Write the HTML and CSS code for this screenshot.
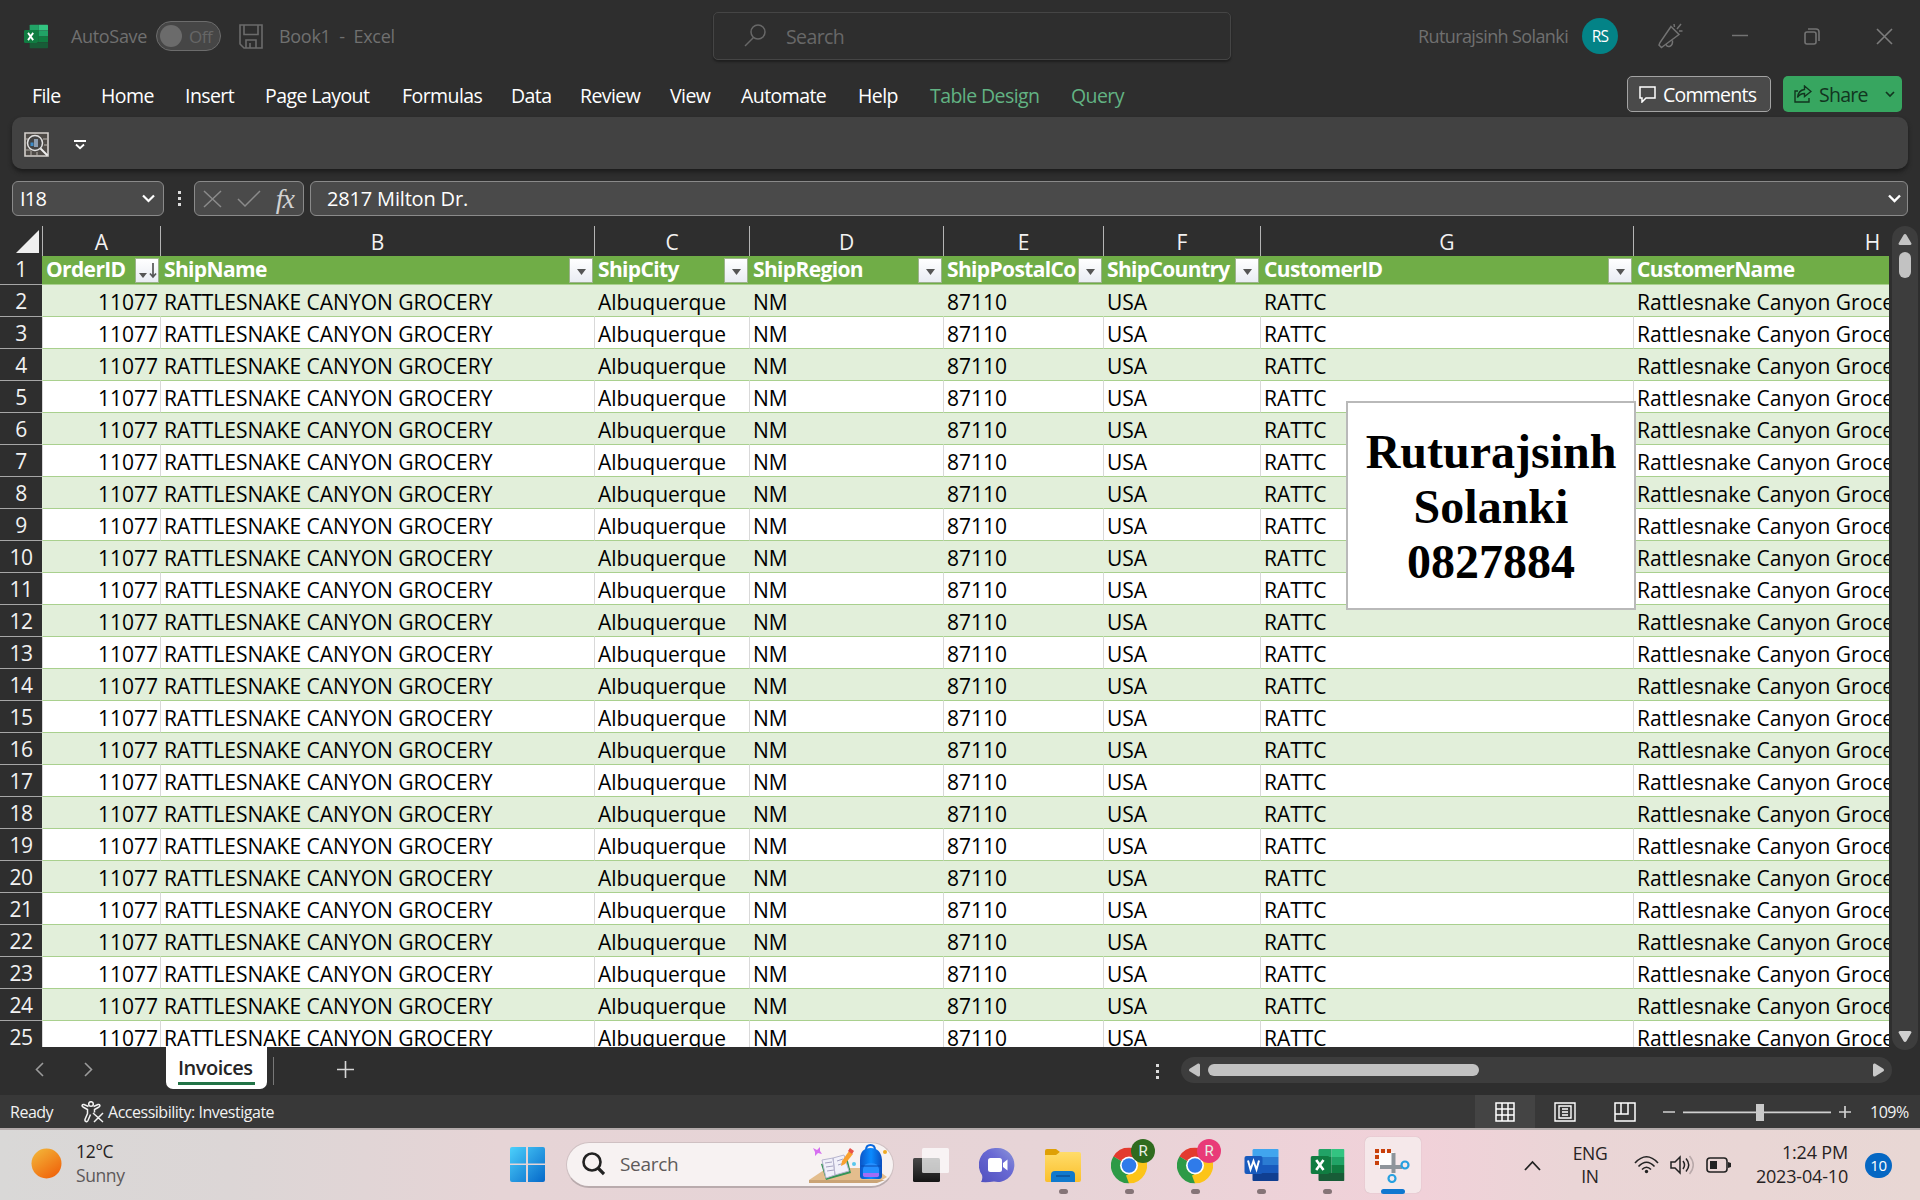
FILE: index.html
```html
<!DOCTYPE html>
<html lang="en">
<head>
<meta charset="utf-8">
<title>Book1 - Excel</title>
<link rel="stylesheet" href="styles.css">
</head>
<body>
<svg width="0" height="0" class="defs">
  <defs>
    <linearGradient id="sun" x1="0" y1="0" x2=".7" y2="1"><stop offset="0" stop-color="#f3bb3c"/><stop offset="1" stop-color="#f0650c"/></linearGradient>
    <linearGradient id="win" x1="0" y1="0" x2="1" y2="1"><stop offset="0" stop-color="#4cd0fb"/><stop offset="1" stop-color="#0568c9"/></linearGradient>
    <linearGradient id="chat" x1="0" y1="1" x2="1" y2="0"><stop offset="0" stop-color="#5050be"/><stop offset=".6" stop-color="#6a6ad4"/><stop offset="1" stop-color="#8d97d8"/></linearGradient>
    <linearGradient id="folder" x1="0" y1="0" x2="0" y2="1"><stop offset="0" stop-color="#ffdc6a"/><stop offset="1" stop-color="#fbc02c"/></linearGradient>
    <linearGradient id="dark" x1="0" y1="0" x2="0" y2="1"><stop offset="0" stop-color="#484848"/><stop offset="1" stop-color="#151515"/></linearGradient>
    <linearGradient id="bag" x1="0" y1="0" x2="1" y2="0"><stop offset="0" stop-color="#0a55c8"/><stop offset=".5" stop-color="#0b8bff"/><stop offset="1" stop-color="#0a4fc0"/></linearGradient>
    <symbol id="excel" viewBox="0 0 34 34">
      <path fill="#21a366" d="M9 1h12v8H8V2z"/><path fill="#33c481" d="M21 1h12a1 1 0 0 1 1 1v7H21z"/>
      <path fill="#107c41" d="M8 9h13v16H8z"/><path fill="#21a366" d="M21 9h13v8H21z"/><path fill="#107c41" d="M21 17h13v8H21z"/>
      <path fill="#185c37" d="M8 25h26v7a1 1 0 0 1-1 1H9a1 1 0 0 1-1-1z"/>
      <rect y="8" width="19" height="18" rx="2" fill="#107c41"/>
      <path d="M5.700 12l7.300 10M13 12L5.700 22" stroke="#fff" stroke-width="2.600" fill="none"/>
    </symbol>
    <symbol id="chrome" viewBox="0 0 36 36">
      <path fill="#e33b2e" d="M18 18L2.400 9A18 18 0 0 1 33.600 9z"/>
      <path fill="#fcc419" d="M18 18l15.600-9A18 18 0 0 1 18 36z"/>
      <path fill="#2d9a46" d="M18 18v18A18 18 0 0 1 2.400 9z"/>
      <path fill="#e33b2e" d="M18 9h15.600L29 14z"/><path fill="#2d9a46" d="M2.400 9l7.800 13.500L14 18z"/><path fill="#fcc419" d="M25.800 22.500L18 36l-3-8z"/>
      <circle cx="18" cy="18" r="9" fill="#fff"/><circle cx="18" cy="18" r="7.300" fill="#2f7bea"/>
    </symbol>
  </defs>
</svg>

<header class="title-bar">
  <div class="title-left">
    <svg class="app-icon" width="24" height="25" preserveAspectRatio="none" viewBox="0 0 34 34"><use href="#excel"/></svg>
    <span class="autosave">AutoSave</span>
    <span class="toggle"><i></i>Off</span>
    <svg class="save" width="24" height="25" viewBox="0 0 24 25" fill="none" stroke="#6b6b6b" stroke-width="1.600"><path d="M1 1h22v23H5l-4-4zM5 1v9.500h14V1M7 24v-8h10v8M11 19v5"/></svg>
    <span class="book">Book1 &nbsp;- &nbsp;Excel</span>
  </div>
  <div class="search-box">
    <svg width="22" height="24" viewBox="0 0 22 24" fill="none" stroke="#686868" stroke-width="1.500"><circle cx="14" cy="8" r="7"/><path d="M9.500 13.500L1 22"/></svg>
    <span>Search</span>
  </div>
  <div class="title-right">
    <span class="user">Ruturajsinh Solanki</span>
    <span class="avatar">RS</span>
    <svg class="mega" width="25" height="26" viewBox="0 0 25 26" fill="none" stroke="#737373" stroke-width="1.500"><path d="M13 3.500l8 8L5.500 23l-2 1.500L1 22l1-2.500zM8 21.500c1.500 3.500 7 2.500 6.500-4M16 1l.5 3M23 1l-4 5M21 8h3.500"/></svg>
    <svg class="win-min" width="16" height="16" stroke="#737373" stroke-width="1.500"><path d="M0 7.500h16"/></svg>
    <svg class="win-max" width="17" height="17" viewBox="0 0 17 17" fill="none" stroke="#737373" stroke-width="1.600"><rect x="1" y="4" width="11" height="12" rx="2"/><path d="M4 1h8q3 0 3 3v9"/></svg>
    <svg width="17" height="17" viewBox="0 0 17 17" stroke="#7c7c7c" stroke-width="1.600"><path d="M1 1l15 15M16 1L1 16"/></svg>
  </div>
</header>

<nav class="menu">
  <div class="tabs">
    <span>File</span><span>Home</span><span>Insert</span><span>Page Layout</span><span>Formulas</span><span>Data</span><span>Review</span><span>View</span><span>Automate</span><span>Help</span><span class="context">Table Design</span><span class="context">Query</span>
  </div>
  <button class="comments"><svg width="17" height="17" viewBox="0 0 17 17" fill="none" stroke="#fff" stroke-width="1.500"><path d="M1 1h15v11H7l-4 4v-4H1z"/></svg><span>Comments</span></button>
  <button class="share"><svg width="18" height="18" viewBox="0 0 18 18" fill="none" stroke="#12351f" stroke-width="1.400"><path d="M4 6H1v11h14v-4M10.500 1L17 6.500l-6.500 5V8.500C7 8.500 5 10 3.500 12.500 4 8 6.500 5 10.500 4.500z"/></svg><span>Share</span><svg width="10" height="8" viewBox="0 0 10 8" fill="none" stroke="#12351f" stroke-width="1.700"><path d="M1 2l4 4 4-4"/></svg></button>
</nav>

<section class="ribbon">
  <svg width="25" height="25" viewBox="0 0 25 25" fill="none"><path d="M1 1h23v23H1z" fill="#4f4b47" stroke="#d4d0cc" stroke-width="1.600"/><path d="M1 7h5M1 18h6M7 24v-5M13 24v-4M19 7h5M20 13h4" stroke="#b9b4ae"/><circle cx="11" cy="11" r="7.500" fill="#444" stroke="#e2e2e2" stroke-width="1.500"/><path d="M6.500 10.500h3V14h-3z" fill="#3d8bc9"/><path d="M10 7h4v8h-4z" fill="#8d9db0"/><path d="M16.500 16.500l7 7" stroke="#eee" stroke-width="2"/></svg>
  <svg width="12" height="10" viewBox="0 0 12 10" fill="none" stroke="#fff" stroke-width="1.800"><path d="M0 1h12M2 4.500l4 3.700 4-3.700"/></svg>
</section>

<section class="formula-bar">
  <div class="name-box"><span>I18</span><svg width="13" height="9" viewBox="0 0 13 9" fill="none" stroke="#fff" stroke-width="2.200"><path d="M1 1.500l5.500 5.500L12 1.500"/></svg></div>
  <div class="dots"><i></i><i></i><i></i></div>
  <div class="fx-box">
    <svg width="19" height="18" viewBox="0 0 19 18" stroke="#8b8b8b" stroke-width="1.500"><path d="M1 1l17 16M18 1L1 17"/></svg>
    <svg width="24" height="18" viewBox="0 0 24 18" fill="none" stroke="#8b8b8b" stroke-width="1.500"><path d="M1 9l7 7L23 1"/></svg>
    <em>fx</em>
  </div>
  <div class="formula"><span>2817 Milton Dr.</span><svg width="13" height="9" viewBox="0 0 13 9" fill="none" stroke="#fff" stroke-width="2.400"><path d="M1 1.500l5.500 5.500L12 1.500"/></svg></div>
</section>

<main class="workbook">
  <div class="sheet">
    <div class="row letters"><span class="corner"><svg width="23" height="23"><path d="M23 0v23H0z" fill="#efefef"/></svg></span><span>A</span><span>B</span><span>C</span><span>D</span><span>E</span><span>F</span><span>G</span><span class="col-h">H</span></div>
    <div class="row heads" id="heads"><b>1</b></div>
    <div id="rows"></div>
    <div class="note">Ruturajsinh<br>Solanki<br>0827884</div>
  </div>
  <div class="v-scroll">
    <svg width="14" height="11"><path d="M7 0q1 0 1.500 1l5 8.500q0 1.500-1.500 1.500h-10Q.500 11 .500 9.500l5-8.500Q6 0 7 0z" fill="#c3c3c3"/></svg>
    <i></i>
    <svg class="down" width="14" height="11"><path d="M7 11q-1 0-1.500-1l-5-8.500Q.500 0 2 0h10q1.500 0 1.500 1.500l-5 8.500Q8 11 7 11z" fill="#d0d0d0"/></svg>
  </div>
</main>

<section class="sheet-tabs">
  <svg class="prev" width="9" height="15" fill="none" stroke="#9b9b9b" stroke-width="1.600"><path d="M8 1L1.500 7.500 8 14"/></svg>
  <svg class="next" width="9" height="15" fill="none" stroke="#9b9b9b" stroke-width="1.600"><path d="M1 1l6.500 6.500L1 14"/></svg>
  <div class="sheet-tab"><span>Invoices</span></div>
  <i class="divider"></i>
  <svg class="add" width="17" height="17" stroke="#d6d6d6" stroke-width="1.600"><path d="M8.500 0v17M0 8.500h17"/></svg>
  <div class="dots tab-dots"><i></i><i></i><i></i></div>
  <div class="h-scroll">
    <svg width="11" height="14"><path d="M0 7q0-1 1-1.500L9 .500Q11 0 11 2v10q0 2-2 1.500L1 8.500Q0 8 0 7z" fill="#c3c3c3"/></svg>
    <i></i>
    <svg class="right" width="11" height="14"><path d="M11 7q0-1-1-1.500L2 .500Q0 0 0 2v10q0 2 2 1.500l8-5Q11 8 11 7z" fill="#c9c9c9"/></svg>
  </div>
</section>

<section class="status">
  <span class="ready">Ready</span>
  <svg class="access" width="23" height="22" viewBox="0 0 23 22" fill="none" stroke="#f2f2f2" stroke-width="1.500"><circle cx="10" cy="3" r="2.300"/><path d="M7.500 5.500L3 3.500C1 3 .500 5 2 6l4.500 2.500v4L4 18.500c-.5 2 2 3 3 1l2.500-6M12.500 5.500L17 3.500c2-.5 2.500 1.500 1 2.500l-4.500 2.500v3M12 12l10 9M22 12l-9 9"/></svg>
  <span class="check">Accessibility: Investigate</span>
  <div class="view active"><svg width="20" height="20" fill="none" stroke="#fff" stroke-width="1.500"><path d="M1 1h18v18H1zM1 7h18M1 13h18M7 1v18M13 1v18"/></svg></div>
  <div class="view"><svg width="22" height="20" fill="none" stroke="#fff" stroke-width="1.400"><path d="M1 1h20v18H1zM5 4h12v12H5zM8 7h6M8 10h6M8 13h6"/></svg></div>
  <div class="view"><svg width="22" height="20" fill="none" stroke="#fff" stroke-width="1.500"><path d="M1 1h20v18H1zM1 12h13V1M7 1v11"/></svg></div>
  <svg class="zoom" width="190" height="20" stroke="#d0d0d0" stroke-width="1.700"><path d="M0 10h12M20 10.300h148M176 10h12M182 4v12"/><rect x="93" y="2" width="8" height="17" fill="#c9c9c9" stroke="none"/></svg>
  <span class="percent">109%</span>
</section>

<footer class="taskbar">
  <div class="weather">
    <svg width="31" height="31"><circle cx="15.500" cy="15.500" r="15" fill="url(#sun)"/></svg>
    <div>12°C<small>Sunny</small></div>
  </div>
  <svg class="start" width="35" height="35"><path d="M2 0h14v16.500H0V2q0-2 2-2zM18 0h15q2 0 2 2v14.500H18zM0 18h16v17H2q-2 0-2-2zM18 18h17v15q0 2-2 2H18z" fill="url(#win)"/></svg>
  <div class="task-search">
    <svg width="23" height="24" fill="none" stroke="#222" stroke-width="2.600"><circle cx="10" cy="10" r="8.500"/><path d="M16 16l6 6" stroke-width="3.200"/></svg>
    <span>Search</span>
    <svg class="doodle" width="81" height="40" viewBox="0 0 81 40">
      <path d="M0 36l18-12h48l12 9-5 3z" fill="#e3bd8d"/><path d="M0 36h76l-8 3H0z" fill="#caa476"/>
      <path d="M12 20l26-7 4 16-25 7z" fill="#359556"/><path d="M13 16l11-2 2 17-9 3zM24 14l11-3 5 16-14 4z" fill="#f1f0fa" stroke="#b7b5cf"/><path d="M16 19l7-1M17 23l7-1M18 27l7-1M28 17l6-2M29 21l6-2" stroke="#a5a3c2"/>
      <path d="M32 22l1-5L40 7l4 3-8 10z" fill="#f9a12f"/><path d="M39 7l2-3 4 3-2 3z" fill="#e8524a"/>
      <path d="M57 6q0-5 4.500-5T66 6" fill="none" stroke="#0b68dd" stroke-width="2"/><path d="M51 16q0-12 10.500-12T73 16v16q0 3-3 3H54q-3 0-3-3z" fill="url(#bag)"/><path d="M54 25q1-6 8-6t8 6v6q0 2-3 2H57q-3 0-3-2z" fill="#258fff"/><path d="M54 29h16v2q0 2-3 2H57q-3 0-3-2z" fill="#a36cf5"/><path d="M52 22h20" stroke="#084bb1"/>
      <path d="M4 4l4 2 3-3 0 4 2 3-4-1-3 3 0-4z" fill="#d66ff0"/><circle cx="45" cy="20" r="2" fill="#59c7ec"/><circle cx="76" cy="8" r="2" fill="#efaa23"/>
    </svg>
  </div>
  <div class="apps">
    <div class="app"><svg width="36" height="36"><rect x="0" y="11" width="27" height="24" rx="1.500" fill="url(#dark)"/><rect x="9" y="1" width="27" height="25" rx="1.500" fill="#fff" opacity=".72"/></svg></div>
    <div class="app"><svg width="36" height="36"><path d="M18 1a16.500 17 0 1 1-3 33.500Q9 35.500 2 35q2-3 1-7A16.500 17 0 0 1 18 1z" fill="url(#chat)"/><rect x="9" y="11" width="14" height="14" rx="2.500" fill="#fff"/><path d="M24 16l4.500-3.500v11L24 20z" fill="#fff"/></svg></div>
    <div class="app run"><svg width="36" height="36"><path d="M0 9V4q0-2 2-2h9l4 3-3 4z" fill="#dfa005"/><path d="M0 8h11l4-3h19q2 0 2 2v26q0 2-2 2H2q-2 0-2-2z" fill="url(#folder)"/><path d="M6 35v-7q0-4 4-4h16q4 0 4 4v7z" fill="#1079cd"/><path d="M11 29h14" stroke="#0b5196" stroke-width="1.500"/></svg></div>
    <div class="app run"><svg width="36" height="37" viewBox="0 0 36 36"><use href="#chrome"/></svg><span class="profile">R</span></div>
    <div class="app run"><svg width="36" height="37" viewBox="0 0 36 36"><use href="#chrome"/></svg><span class="profile pink">R</span></div>
    <div class="app run"><svg width="35" height="34" viewBox="0 0 34 34"><path fill="#41a5ee" d="M9 1h24q1 0 1 1v7H8V2z"/><path fill="#2b7cd3" d="M8 9h26v8H8z"/><path fill="#185abd" d="M8 17h26v8H8z"/><path fill="#103f91" d="M8 25h26v7q0 1-1 1H9q-1 0-1-1z"/><rect y="8" width="18" height="18" rx="2" fill="#185abd"/><path d="M3.500 12.500l2.500 9 3-8.500 3 8.500 2.500-9" fill="none" stroke="#fff" stroke-width="2"/></svg></div>
    <div class="app run"><svg width="35" height="34" viewBox="0 0 34 34"><use href="#excel"/></svg></div>
    <div class="app current"><svg width="36" height="36"><rect x="4" y="5" width="15" height="16" fill="#fdfdfd"/><path d="M2 18V4h16" fill="none" stroke="#c8410c" stroke-width="4" stroke-dasharray="4 2"/><path d="M18.500 6v20M5 20h22" stroke="#8e959b" stroke-width="4"/><g fill="none" stroke="#27a0e0" stroke-width="2.200"><circle cx="30" cy="18" r="3.500"/><circle cx="17" cy="31.500" r="3.500"/></g></svg></div>
  </div>
  <div class="tray">
    <svg class="chev" width="17" height="11" fill="none" stroke="#222" stroke-width="1.800"><path d="M1 10l7.500-8L16 10"/></svg>
    <div class="lang">ENG<br>IN</div>
    <svg class="wifi" width="25" height="20" viewBox="0 0 25 20" fill="none" stroke="#222" stroke-width="1.600"><path d="M1 8Q12.500-4.500 24 8M4.500 11.500q8-8.500 16 0M8 14.500q4.500-4.500 9 0"/><circle cx="12.500" cy="16.500" r="1.700" fill="#222" stroke="none"/></svg>
    <svg class="vol" width="25" height="20" viewBox="0 0 25 20" fill="none" stroke="#222" stroke-width="1.500"><path d="M1 7h4l5-5v16l-5-5H1zM13 6q3 4 0 8M16 3.500q5.500 6.500 0 13"/><path d="M19.500 1q7.500 9 0 18" stroke="#b9a9aa"/></svg>
    <svg class="batt" width="25" height="16" viewBox="0 0 25 16"><rect x="1" y="1" width="20" height="14" rx="3" fill="none" stroke="#222" stroke-width="1.600"/><rect x="4" y="4" width="7" height="8" fill="#222"/><path d="M22 5l3 1v4l-3 1z" fill="#222"/></svg>
    <div class="clock">1:24 PM<br>2023-04-10</div>
    <span class="badge">10</span>
  </div>
</footer>
<script src="script.js"></script>
</body>
</html>
```
FILE: styles.css
```css
* { box-sizing: border-box; }
body {
  margin: 0; width: 1920px; height: 1200px; overflow: hidden;
  display: flex; flex-direction: column;
  background: #2e2e2e; color: #fff;
  font-family: "Open Sans", "Noto Sans", sans-serif; font-size: 20px;
}
svg { display: block; flex: none; }
.defs { position: absolute; }
span, b { white-space: nowrap; }

/* title bar */
.title-bar { height: 72px; flex: none; display: grid; grid-template-columns: 713px 518px 1fr; align-items: start; color: #707070; font-size: 18px; }
.title-left, .title-right { display: flex; align-items: center; height: 72px; }
.title-left { padding-left: 24px; }
.autosave { width: 85px; margin-left: 23px; letter-spacing: -.33px; }
.toggle { width: 65px; height: 30px; border: 1px solid #6c6c6c; border-radius: 15px; background: #464646; display: flex; align-items: center; gap: 7px; padding-left: 3px; font-size: 17px; letter-spacing: -.5px; color: #666; }
.toggle i { width: 22px; height: 22px; border-radius: 50%; background: #6b6b6b; }
.save { margin-left: 18px; }
.book { margin-left: 16px; letter-spacing: -.3px; }
.search-box { height: 48px; margin-top: 12px; border: 1px solid #454545; border-radius: 5px; box-shadow: 0 2px 2px #1f1f1f; display: flex; align-items: center; gap: 20px; padding-left: 30px; font-size: 19.500px; letter-spacing: -.6px; color: #686868; }
.title-right { padding-left: 187px; }
.user { width: 151px; letter-spacing: -.61px; }
.avatar { width: 36px; height: 36px; margin-left: 13px; border-radius: 50%; background: #038387; color: #fff; font-size: 15.500px; display: grid; place-items: center; letter-spacing: -.7px; }
.mega { margin-left: 40px; }
.win-min { margin-left: 49px; }
.win-max { margin-left: 56px; margin-right: 55px; }

/* menu tabs */
.menu { height: 45px; flex: none; display: flex; align-items: flex-start; padding-top: 4px; }
.tabs { width: 1627px; padding: 6px 0 0 32px; display: grid; grid-template-columns: 69px 84px 80px 137px 109px 69px 90px 71px 117px 72px 141px 80px; font-size: 19.500px; line-height: 28px; letter-spacing: -.57px; }
.context { color: #62b383; }
button { font: 19.500px/1 "Open Sans", sans-serif; letter-spacing: -.75px; height: 36px; border-radius: 5px; display: flex; align-items: center; padding: 0; }
button span { padding-top: 2px; }
.comments { width: 144px; padding-left: 11px; gap: 7px; background: #4a4a4a; border: 1px solid #a3a3a3; color: #fff; }
.share { width: 119px; margin-left: 12px; padding-left: 11px; background: #37a660; border: 0; color: #12351f; }
.share span { width: 66px; margin-left: 7px; text-align: left; }

.ribbon { height: 52px; flex: none; margin: 0 12px; padding: 3px 0 0 12px; border-radius: 10px; background: #424242; box-shadow: 0 3px 4px #1c1c1c; display: flex; align-items: center; gap: 25px; }

/* formula bar */
.formula-bar { height: 35px; flex: none; margin: 12px 12px 0; display: flex; line-height: 33px; }
.name-box, .fx-box, .formula { border: 1px solid #8a8a8a; border-radius: 6px; background: #4a4a4a; display: flex; align-items: center; justify-content: space-between; }
.name-box { width: 152px; padding: 0 8px 0 7px; letter-spacing: -.8px; }
.dots { display: flex; flex-direction: column; gap: 3px; }
.dots i { width: 3px; height: 3px; background: #dcdcdc; }
.formula-bar .dots { margin: 10px 13px 0 14px; }
.fx-box { width: 110px; padding: 0 9px 0 8px; }
.fx-box em { font: italic 28px/30px "Liberation Serif", serif; color: #d2d2d2; letter-spacing: -1px; }
.formula { flex: 1; margin-left: 6px; padding: 0 6px 0 16px; letter-spacing: -.17px; }

/* grid */
.workbook { height: 831px; flex: none; display: flex; padding-top: 10px; }
.sheet { width: 1889px; height: 821px; overflow: hidden; position: relative; font-size: 21px; }
.row { display: grid; grid-template-columns: 42px 118px 434px 155px 194px 160px 157px 373px 480px; width: 2113px; height: 32px; line-height: 32px; }
.letters { height: 30px; line-height: 33px; text-align: center; color: #f2f2f2; }
.letters span + span { border-left: 1px solid #b4b4b4; }
.letters .col-h { padding-right: 2px; }
.corner { display: flex; justify-content: flex-end; padding: 4px 3px 0 0; }
.row b { background: #2e2e2e; color: #f2f2f2; font-weight: 400; text-align: center; border-bottom: 1px solid #a6a6a6; letter-spacing: -.4px; height: 32px; }
.cell { color: #000; background: #fff; padding: 1px 0 0 3px; height: 32px; border-bottom: 1px solid #a9d08e; border-left: 1px solid #d9d9d9; overflow: hidden; }
.cell:nth-child(2) { text-align: right; padding-right: 2px; }
.band .cell { background: #e2efda; border-left-color: #e2efda; }
.heads { height: 29px; line-height: 27px; }
.row.heads b { height: 29px; }
.head { background: #70ad47; border-bottom: 1px solid #a9d08e; font-weight: 700; letter-spacing: -.64px; padding-left: 4px; display: flex; justify-content: space-between; overflow: hidden; }
.filter { flex: none; width: 24px; height: 25px; margin: 2px 1px 0 0; background: linear-gradient(#fff, #e9ecf3); border: 1px solid #9db28d; }

.note { position: absolute; left: 1346px; top: 175px; width: 290px; height: 209px; padding-top: 21px; background: #fff; border: 2px solid #b9b9b9; color: #000; text-align: center; font: bold 48px/55px "Liberation Serif", serif; }

.v-scroll { width: 26px; height: 824px; margin-left: 3px; flex: none; border-radius: 13px; background: #3d3d3d; display: flex; flex-direction: column; align-items: center; padding: 8px 0; }
.v-scroll i { width: 12px; height: 26px; margin-top: 7px; border-radius: 6px; background: #c2c2c2; }
.down { margin-top: auto; }

/* sheet tabs */
.sheet-tabs { height: 48px; flex: none; display: flex; align-items: flex-start; }
.prev { margin: 15px 0 0 35px; }
.next { margin: 15px 0 0 40px; }
.sheet-tab { width: 101px; height: 42px; margin-left: 73px; padding: 6px 12px 0; background: #fff; border-radius: 0 0 7px 7px; color: #252525; font-size: 20px; font-weight: 600; letter-spacing: -.5px; }
.sheet-tab span { display: block; height: 32px; line-height: 30px; border-bottom: 3px solid #217346; }
.divider { width: 1px; height: 28px; margin: 10px 0 0 6px; background: #777; }
.add { margin: 14px 0 0 63px; }
.tab-dots { margin: 17px 0 0 802px; }
.h-scroll { width: 711px; height: 26px; margin: 10px 0 0 22px; border-radius: 13px; background: #3d3d3d; display: flex; align-items: center; padding: 0 8px; }
.h-scroll i { width: 271px; height: 12px; margin-left: 8px; border-radius: 6px; background: #c2c2c2; }
.right { margin-left: auto; }

/* status bar */
.status { height: 33px; flex: none; background: #383838; display: flex; align-items: center; font-size: 16px; letter-spacing: -.48px; color: #f2f2f2; }
.ready { width: 71px; padding-left: 10px; }
.access { margin-left: 10px; }
.check { margin-left: 4px; width: 1367px; }
.view { width: 60px; height: 33px; display: grid; place-items: center; }
.active { background: #444; }
.zoom { margin-left: 8px; }
.percent { margin-left: 17px; }

/* taskbar */
.taskbar { height: 72px; flex: none; border-top: 2px solid #b4abab; display: flex; align-items: center; color: #262223; font-size: 17.500px; letter-spacing: -.3px; line-height: 24px; background: linear-gradient(90deg, #d9d8d7, #dcd6d6 12%, #e6d4d6 26%, #e7d4d7 55%, #f1d1d9 74%, #ead5d6 82%, #e8d7d4); }
.weather { width: 510px; display: flex; gap: 14px; padding: 0 0 4px 31px; align-items: center; }
.weather small { display: block; font-size: 17.500px; color: #5d595a; letter-spacing: -.4px; }
.start { margin-top: -1px; }
.task-search { width: 328px; height: 46px; margin: -1px 0 0 21px; border: 1px solid #cfc0c2; border-bottom: 2px solid #b9abad; border-radius: 23px; background: #f7f2f2; display: flex; align-items: center; padding-left: 15px; font-size: 19px; letter-spacing: -.3px; color: #5e5a5a; }
.task-search span { margin-left: 15px; width: 189px; }
.apps { display: flex; margin-left: 4px; }
.app { width: 56px; height: 56px; margin: 0 5px; display: grid; place-items: center; position: relative; border-radius: 5px; }
.app.run::after { content: ""; position: absolute; bottom: -1px; left: 24px; width: 9px; height: 5px; border-radius: 3px; background: #857477; }
.app.current { background: #f5e8ea; box-shadow: 0 0 1px #b8a6a9; }
.app.current::after { content: ""; position: absolute; bottom: -1px; left: 16px; width: 24px; height: 5px; border-radius: 3px; background: #0f77d0; }
.profile { position: absolute; left: 30px; top: 2px; width: 24px; height: 24px; border-radius: 50%; background: #2f6b1f; color: #e8efe6; font: 15px/24px Roboto, sans-serif; text-align: center; letter-spacing: 0; }
.pink { background: #e93b78; }
.tray { display: flex; align-items: center; margin-left: auto; padding-right: 28px; }
.lang { width: 36px; margin-left: 31px; text-align: center; line-height: 23px; }
.wifi { margin-left: 26px; }
.vol { margin-left: 11px; }
.batt { margin-left: 11px; }
.clock { width: 117px; padding-bottom: 3px; text-align: right; font-size: 18px; letter-spacing: -.18px; }
.badge { width: 27px; height: 25px; margin-left: 17px; border-radius: 13px; background: #0567c3; color: #fff; text-align: center; font-size: 15px; line-height: 24px; }
```
FILE: script.js
```javascript
const columns = ['OrderID', 'ShipName', 'ShipCity', 'ShipRegion', 'ShipPostalCo', 'ShipCountry', 'CustomerID', 'CustomerName'];
const record = ['11077', 'RATTLESNAKE CANYON GROCERY', 'Albuquerque', 'NM', '87110', 'USA', 'RATTC', 'Rattlesnake Canyon Grocery'];

const arrow = '<svg width="22" height="23"><path d="M7 10h9l-4.500 6z" fill="#555"/></svg>';
const sorted = '<svg width="22" height="23"><path d="M3 14h8l-4 5z" fill="#555"/><path d="M17 4v14M14 14.500l3 3.500 3-3.500" fill="none" stroke="#555" stroke-width="1.700"/></svg>';

document.getElementById('heads').insertAdjacentHTML('beforeend', columns.map((name, i) =>
  `<div class="head"><span>${name}</span><i class="filter">${i ? arrow : sorted}</i></div>`).join(''));

let html = '';
for (let n = 2; n <= 25; n++) {
  html += `<div class="row${n % 2 ? '' : ' band'}"><b>${n}</b>` +
    record.map(value => `<span class="cell">${value}</span>`).join('') + '</div>';
}
document.getElementById('rows').innerHTML = html;
```
